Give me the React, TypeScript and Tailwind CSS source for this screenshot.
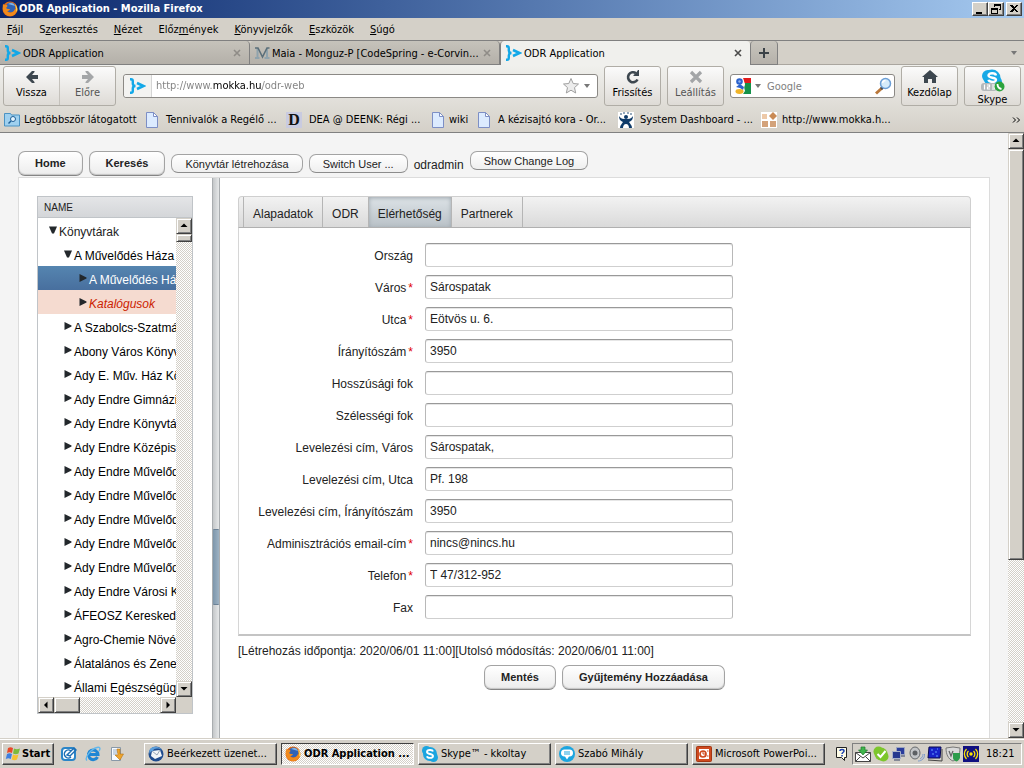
import React from "react";

const bookmarks = [
  { label: "Legtöbbször látogatott", icon: "folder", width: "w-[141px]", gap: "gap-1" },
  { label: "Tennivalók a Regélő ...", icon: "page", width: "w-[141px]", gap: "gap-[7px]" },
  { label: "DEA @ DEENK: Régi ...", icon: "dea", width: "w-[145px]", gap: "gap-[7px]" },
  { label: "wiki", icon: "page", width: "w-[46px]", gap: "gap-1" },
  { label: "A kézisajtó kora - Or...", icon: "page", width: "w-[141px]", gap: "gap-[7px]" },
  { label: "System Dashboard - ...", icon: "jira", width: "w-[143px]", gap: "gap-1" },
  { label: "http://www.mokka.h...", icon: "mokka", width: "w-[141px]", gap: "gap-1" },
];

const menu = [
  ["", "F", "ájl"],
  ["S", "z", "erkesztés"],
  ["", "N", "ézet"],
  ["Előz", "m", "ények"],
  ["", "K", "önyvjelzők"],
  ["", "E", "szközök"],
  ["", "S", "úgó"],
];

const libraries = [
  "A Szabolcs-Szatmá",
  "Abony Város Könyv",
  "Ady E. Műv. Ház Kö",
  "Ady Endre Gimnázi",
  "Ady Endre Könyvtá",
  "Ady Endre Középis",
  "Ady Endre Művelőd",
  "Ady Endre Művelőd",
  "Ady Endre Művelőd",
  "Ady Endre Művelőd",
  "Ady Endre Művelőd",
  "Ady Endre Városi K",
  "ÁFEOSZ Keresked",
  "Agro-Chemie Növé",
  "Álatalános és Zene",
  "Állami Egészségüg",
];

const fields = [
  { id: "orszag", label: "Ország", value: "" },
  { id: "varos", label: "Város", value: "Sárospatak", required: true },
  { id: "utca", label: "Utca", value: "Eötvös u. 6.", required: true },
  { id: "iranyitoszam", label: "Írányítószám", value: "3950", required: true },
  { id: "hosszusag", label: "Hosszúsági fok", value: "" },
  { id: "szelesseg", label: "Szélességi fok", value: "" },
  { id: "lev-varos", label: "Levelezési cím, Város", value: "Sárospatak," },
  { id: "lev-utca", label: "Levelezési cím, Utca", value: "Pf. 198" },
  { id: "lev-irsz", label: "Levelezési cím, Írányítószám", value: "3950" },
  { id: "email", label: "Adminisztrációs email-cím", value: "nincs@nincs.hu", required: true },
  { id: "telefon", label: "Telefon", value: "T 47/312-952", required: true },
  { id: "fax", label: "Fax", value: "" },
];

const App = () => {
  return (
    <div className="flex h-screen flex-col overflow-hidden bg-[#d4d0c8] font-['DejaVu_Sans_Condensed','DejaVu_Sans',sans-serif] text-[11px] leading-4 text-black">
      <TitleBar />
      <MenuBar />
      <TabStrip />
      <div className="shrink-0 bg-gradient-to-b from-[#f0f0ed] to-[#d4d0c8] border-b border-[#808080]">
        <Toolbar />
        <BookmarkBar />
      </div>
      <main className="flex min-h-0 flex-1 bg-[#f4f4f4]">
        <OdrPage />
        <div className="flex w-4 shrink-0 flex-col bg-[repeating-conic-gradient(#fff_0_25%,#d4d0c8_0_50%)] bg-[length:2px_2px]">
          <ScrollButton dir="up" />
          <div className="h-[68%] bg-[#d4d0c8] border border-[#d4d0c8] border-r-[#404040] border-b-[#404040] shadow-[inset_1px_1px_0_#fff,inset_-1px_-1px_0_#808080]" />
          <div className="flex-1" />
          <ScrollButton dir="down" />
        </div>
      </main>
      <TaskBar />
    </div>
  );
};

const TitleBar = () => (
  <header className="flex h-[18px] shrink-0 items-center gap-px bg-gradient-to-r from-[#0a246a] to-[#a6caf0] pl-[2px] pr-[2px] text-white">
    <FirefoxIcon />
    <h1 className="flex-1 font-bold">ODR Application - Mozilla Firefox</h1>
    <div className="flex">
      <WindowButton label="Kis méret">
        <path d="M3 9h6v2H3z" />
      </WindowButton>
      <WindowButton label="Előző méret">
        <path d="M5 1h7v6h-2V6h1V3H6v1H5zM2 5h7v6H2zM3 7v3h5V7z" fillRule="evenodd" />
      </WindowButton>
      <span className="w-[2px]" />
      <WindowButton label="Bezárás">
        <path d="M3 2h2l2 2 2-2h2L8 5.500l3 3.500H9L7 7 5 9H3l3-3.500z" />
      </WindowButton>
    </div>
  </header>
);

const WindowButton = ({ label, children }: { label: string; children: React.ReactNode }) => (
  <button
    aria-label={label}
    className="flex h-[14px] w-4 items-center justify-center border border-t-white border-l-white border-r-[#404040] border-b-[#404040] bg-[#d4d0c8] shadow-[inset_-1px_-1px_0_#808080]"
  >
    <svg width="14" height="12" viewBox="0 0 14 12" fill="#000" shapeRendering="crispEdges">
      {children}
    </svg>
  </button>
);

const MenuBar = () => (
  <nav className="flex h-[22px] shrink-0 items-center gap-4 pt-px pl-[7px]">
    {menu.map(([before, key, after]) => (
      <button key={before + key + after}>
        {before}
        <u>{key}</u>
        {after}
      </button>
    ))}
  </nav>
);

const TabStrip = () => (
  <div className="flex h-[25px] shrink-0 items-stretch border-t border-[#808080]">
    <BrowserTab title="ODR Application" icon={<OdrIcon />} />
    <BrowserTab title="Maia - Monguz-P [CodeSpring - e-Corvin..." icon={<MaiaIcon />} />
    <BrowserTab title="ODR Application" icon={<OdrIcon />} active />
    <button
      aria-label="Új lap"
      className="flex w-7 items-center justify-center rounded-t-sm border-x border-b border-[#808080] bg-gradient-to-b from-[#c8c5bd] to-[#b5b1aa]"
    >
      <svg width="12" height="12" viewBox="0 0 12 12">
        <path d="M5 1h2v4h4v2H7v4H5V7H1V5h4z" fill="#3b4247" />
      </svg>
    </button>
    <div className="flex flex-1 items-center justify-end border-b border-[#aaa69f] bg-[#d4d0c8] pr-[7px]">
      <SmallArrow />
    </div>
  </div>
);

const BrowserTab = ({ title, icon, active }: { title: string; icon: React.ReactNode; active?: boolean }) => (
  <div
    className={
      active
        ? "flex w-[250px] min-w-0 items-center gap-[2px] rounded-t-sm border-l border-[#808080] bg-[#f0f0ed] pl-1 pr-2"
        : "flex w-[250px] min-w-0 items-center gap-[2px] rounded-t-sm border-r border-b border-[#808080] bg-gradient-to-b from-[#c6c3bb] to-[#b4b0a9] pl-1 pr-2"
    }
  >
    {icon}
    <button className="min-w-0 flex-1 overflow-hidden pt-[2px] text-left whitespace-nowrap">{title}</button>
    <button aria-label="Lap bezárása" className={active ? "text-[#4a4a4a]" : "text-[#8f8c87]"}>
      <svg width="8" height="8" viewBox="0 0 8 8" fill="none" stroke="currentColor" strokeWidth="1.600">
        <path d="M1 1l6 6M7 1L1 7" />
      </svg>
    </button>
  </div>
);

const Toolbar = () => (
  <div className="flex items-center gap-[6px] px-[3px] pt-px">
    <div className="mr-px flex h-10 w-[113px] rounded-[3px] border border-[#b0ada6] bg-gradient-to-b from-[#fbfbfb] to-[#dedbd6]">
      <button className="flex flex-1 flex-col items-center border-r border-[#c5c2bc] pt-[2px]">
        <ArrowIcon className="fill-[#3d474f]" />
        Vissza
      </button>
      <button className="flex flex-1 flex-col items-center pt-[2px] text-[#555]">
        <ArrowIcon className="-scale-x-100 fill-[#a4a6a8]" />
        Előre
      </button>
    </div>
    <div className="flex h-6 min-w-0 flex-1 items-center rounded-[3px] border border-[#8b8985] bg-white">
      <div className="flex h-full w-7 items-center justify-center rounded-l-[3px] border-r border-[#d5d5d5] bg-[#f3f3f1]">
        <OdrIcon />
      </div>
      <input
        aria-label="Cím"
        defaultValue="http://www.mokka.hu/odr-web"
        className="ml-1 min-w-0 flex-1 bg-[linear-gradient(90deg,#808080_57px,#000_57px,#000_106px,#808080_106px)] bg-clip-text text-transparent outline-none"
      />
      <button aria-label="Könyvjelzőzés" className="mr-1">
        <svg width="18" height="18" viewBox="0 0 18 18">
          <path
            d="M9 1.500l2.200 5 5.300.5-4 3.600 1.200 5.400L9 13.200 4.300 16l1.200-5.400-4-3.600 5.300-.5z"
            fill="#ececec"
            stroke="#a0a0a0"
          />
        </svg>
      </button>
      <button aria-label="Előzmények megjelenítése" className="mr-[7px]">
        <SmallArrow />
      </button>
    </div>
    <ToolButton label="Frissítés">
      <svg width="16" height="16" viewBox="0 0 16 16">
        <path d="M12.500 10.500A5 5 0 1 1 11 4.200" fill="none" stroke="#3d474f" strokeWidth="2.600" />
        <path d="M8.500 7V6l2-1.500L13 1h1v6z" fill="#3d474f" />
      </svg>
    </ToolButton>
    <ToolButton label="Leállítás" muted>
      <svg width="16" height="16" viewBox="0 0 16 16">
        <path d="M3 3l10 10M13 3L3 13" stroke="#a3a5a7" strokeWidth="3.200" />
      </svg>
    </ToolButton>
    <div className="flex h-6 w-[165px] shrink-0 items-center rounded-[3px] border border-[#8b8985] bg-white pl-1 pr-[2px]">
      <svg width="16" height="16" viewBox="0 0 16 16" className="shrink-0">
        <path d="M8 0h8v6H9z" fill="#e11b1b" />
        <path d="M10 5h6v11H8z" fill="#15924a" />
        <path d="M0 0h8l2 6-1 3 1 4-2 3H0z" fill="#fff" />
        <circle cx="4.500" cy="3.500" r="3.300" fill="#2b62cc" />
        <path d="M5 6l4 3-1 3-3-2-4-1z" fill="#2b62cc" />
        <ellipse cx="4.500" cy="13.500" rx="4" ry="2.400" fill="#f0b429" />
        <circle cx="4.500" cy="3.500" r="1.200" fill="#8fb2ee" />
      </svg>
      <button aria-label="Keresőszolgáltatás" className="mx-1">
        <SmallArrow />
      </button>
      <input aria-label="Keresés" placeholder="Google" className="ml-[2px] min-w-0 flex-1 pt-[2px] outline-none placeholder:text-[#808080]" />
      <button aria-label="Keresés indítása">
        <svg width="18" height="18" viewBox="0 0 18 18">
          <path d="M7 10l2 2-6 5.500-2-2z" fill="#b9773a" />
          <path d="M8 9l2 2-2 2-2-2z" fill="#47484a" />
          <circle cx="11.500" cy="6.500" r="5" fill="#d5ebfa" stroke="#6c9fd6" strokeWidth="1.500" />
          <path d="M8.500 6a3 3 0 0 1 3-2.500" stroke="#fff" strokeWidth="1.500" fill="none" />
        </svg>
      </button>
    </div>
    <ToolButton label="Kezdőlap">
      <svg width="16" height="16" viewBox="0 0 16 16">
        <path d="M8 1l8 7h-2v6h-4v-4H6v4H2V8H0z" fill="#3d474f" />
      </svg>
    </ToolButton>
    <ToolButton label="Skype">
      <svg width="24" height="23" viewBox="0 0 24 23" className="shrink-0">
        <circle cx="7" cy="7" r="6" fill="#17a9e6" />
        <circle cx="15" cy="13" r="6" fill="#17a9e6" />
        <circle cx="11" cy="9" r="8.500" fill="#17a9e6" />
        <path d="M15 6.500C14.500 3.500 7.500 3.500 7.500 6.500c0 2.800 7.500 1.700 7.500 4.300 0 3.200-7 2.500-7.500 0" fill="none" stroke="#fff" strokeWidth="2.400" />
        <rect x="0" y="14" width="16" height="8" rx="3" fill="#b4b9bb" />
        <path d="M3.500 15.500v5M6 16h2.500v2H6.500v2h2.500M11 16h2.500v4H11M11 18h2" stroke="#fff" strokeWidth="1.200" fill="none" />
        <circle cx="18.500" cy="17.500" r="5" fill="#2ba33c" />
        <path d="M16.500 15c0 3 1.500 4.500 4 5" stroke="#fff" strokeWidth="1.800" fill="none" />
      </svg>
    </ToolButton>
  </div>
);

const ToolButton = ({ label, children, muted }: { label: string; children: React.ReactNode; muted?: boolean }) => (
  <button
    className={`flex h-10 w-[57px] shrink-0 flex-col items-center rounded-[3px] border border-[#b0ada6] bg-gradient-to-b from-[#fbfbfb] to-[#dedbd6] pt-[2px] ${
      muted ? "text-[#555]" : ""
    }`}
  >
    {children}
    {label}
  </button>
);

const BookmarkBar = () => (
  <nav className="flex h-[26px] items-center pt-[2px] pl-1 pr-[3px]">
    {bookmarks.map((b) => (
      <a key={b.label} href="#" className={`flex shrink-0 items-center whitespace-nowrap ${b.width} ${b.gap}`}>
        <BookmarkIcon name={b.icon} />
        {b.label}
      </a>
    ))}
    <button aria-label="További könyvjelzők" className="ml-auto">
      <svg width="9" height="6" viewBox="0 0 9 6" fill="none" stroke="#000">
        <path d="M1 .5L3.500 3 1 5.500M5 .5L7.500 3 5 5.500" />
      </svg>
    </button>
  </nav>
);

const BookmarkIcon = ({ name }: { name: string }) => {
  if (name === "folder") {
    return (
      <svg width="16" height="16" viewBox="0 0 16 16" className="shrink-0">
        <path d="M.5 1.500h6l1 1.500h8v11h-15z" fill="#9fd0ef" stroke="#4b93c3" />
        <circle cx="9" cy="7" r="2.500" fill="#e6f5ff" stroke="#1f5f96" />
        <path d="M7 9L4.500 11.500" stroke="#1f5f96" strokeWidth="1.500" />
      </svg>
    );
  }
  if (name === "page") {
    return (
      <svg width="14" height="16" viewBox="0 0 14 16" className="shrink-0">
        <path d="M1.500.5h7l4 4v11h-11z" fill="#dcebff" stroke="#7d8fc5" />
        <path d="M8.500.5v4h4z" fill="#fff" stroke="#7d8fc5" />
      </svg>
    );
  }
  if (name === "dea") {
    return (
      <span className="flex size-4 shrink-0 items-center justify-center bg-[#c9cbe0] font-['Liberation_Serif',serif] text-[16px] leading-4 font-bold text-[#111]">
        D
      </span>
    );
  }
  if (name === "jira") {
    return (
      <svg width="16" height="16" viewBox="0 0 16 16" className="mr-[2px] shrink-0">
        <path d="M0 0h16v16H0z" fill="#fff" />
        <g fill="#0f3b69">
          <circle cx="8" cy="5" r="2" />
          <circle cx="3" cy="2" r=".8" />
          <circle cx="6" cy="1" r=".8" />
          <circle cx="10" cy="1" r=".8" />
          <circle cx="13" cy="2" r=".8" />
          <path d="M1 4c2 3 4 3 7 3s5 0 7-3c0 3-1 5-4 6 1 2 3 3 3 6h-3c0-2-1-4-3-4s-3 2-3 4H2c0-3 2-4 3-6-3-1-4-3-4-6z" />
        </g>
      </svg>
    );
  }
  return (
    <svg width="16" height="16" viewBox="0 0 16 16" className="mr-px shrink-0">
      <path d="M0 0h16v16H0z" fill="#fff" />
      <path d="M1 2h5v5H1z" fill="#edc9a8" />
      <path d="M12 0l4 4-4 4-4-4z" fill="#c98a55" />
      <path d="M1 9h6v6H1zM9 9h6v6H9z" fill="#d3a27a" />
    </svg>
  );
};

const OdrPage = () => (
  <div className="flex min-w-0 flex-1 flex-col pl-[18px] pr-[18px] pt-[18px] font-['Liberation_Sans',Arial,sans-serif] text-xs text-[#222]">
    <div className="flex h-[26px] shrink-0 items-start gap-[6px]">
      <BigButton>Home</BigButton>
      <BigButton>Keresés</BigButton>
      <div className="flex items-start gap-[6px] pt-[3px]">
        <SmallButton>Könyvtár létrehozása</SmallButton>
        <SmallButton>Switch User ...</SmallButton>
        <span className="pt-[3px]">odradmin</span>
      </div>
      <SmallButton>Show Change Log</SmallButton>
    </div>
    <div className="flex min-h-0 flex-1 border border-b-0 border-[#dcdcdc] bg-white">
      <div className="flex w-[193px] shrink-0 flex-col pt-[18px] pr-[19px] pb-6 pl-[18px]">
        <LibraryTree />
      </div>
      <div className="flex w-2 shrink-0 flex-col justify-center border-x border-[#a9adb0] bg-gradient-to-r from-[#c4c7c9] to-[#e6e8e9]">
        <div className="mt-[218px] h-[76px] rounded-[1px] border-y border-[#6c8296] bg-gradient-to-r from-[#7d96ab] to-[#9db2c3]" />
      </div>
      <div className="min-w-0 flex-1 pt-[18px] pr-[18px] pl-[18px]">
        <div role="tablist" className="flex h-8 rounded-t-sm border border-[#cfcfcf] border-b-[#b0b0b0] bg-gradient-to-b from-[#f2f2f2] to-[#dadada] pl-1">
          <FormTab first>Alapadatok</FormTab>
          <FormTab>ODR</FormTab>
          <FormTab active>Elérhetőség</FormTab>
          <FormTab>Partnerek</FormTab>
        </div>
        <form className="flex flex-col gap-2 border border-t-0 border-[#d6d6d6] border-b-2 border-b-[#c4c4c4] py-[15px] pl-2">
          {fields.map((f) => (
            <div key={f.id} className="flex h-6 items-center gap-3">
              <label htmlFor={f.id} className="w-[166px] shrink-0 pt-[2px] text-right whitespace-nowrap">
                {f.label}
                {f.required && <span className="pl-[2px] text-[#e00000]">*</span>}
              </label>
              <input
                id={f.id}
                defaultValue={f.value}
                className="h-6 w-[308px] rounded-[3px] border border-[#b8b8b8] border-t-[#999] border-b-[#cfcfcf] bg-white px-1 outline-none shadow-[inset_0_1px_0_#e6e6e6]"
              />
            </div>
          ))}
        </form>
        <p className="pt-[7px] whitespace-nowrap">[Létrehozás időpontja: 2020/06/01 11:00][Utolsó módosítás: 2020/06/01 11:00]</p>
        <div className="flex justify-center gap-[6px] pt-[6px]">
          <BigButton>Mentés</BigButton>
          <BigButton>Gyűjtemény Hozzáadása</BigButton>
        </div>
      </div>
    </div>
  </div>
);

const BigButton = ({ children }: { children: React.ReactNode }) => (
  <button className="h-[25px] rounded-[7px] border border-[#a3a3a3] border-b-[#858585] bg-gradient-to-b from-white to-[#ececec] px-4 text-[11px] font-bold whitespace-nowrap shadow-[inset_0_-1px_1px_#c4c4c4]">
    {children}
  </button>
);

const SmallButton = ({ children }: { children: React.ReactNode }) => (
  <button className="h-[19px] rounded-[7px] border border-[#a3a3a3] border-b-[#8c8c8c] bg-gradient-to-b from-white to-[#efefef] px-[13px] text-[11px] leading-4 whitespace-nowrap">
    {children}
  </button>
);

const FormTab = ({ children, active, first }: { children: React.ReactNode; active?: boolean; first?: boolean }) => (
  <button
    role="tab"
    aria-selected={!!active}
    className={`border-r border-[#b5b5b5] px-[9px] pt-1 ${first ? "border-l" : ""} ${
      active ? "bg-gradient-to-b from-[#dde3e7] to-[#b9c1c7] shadow-[inset_0_1px_4px_#9da6ad]" : ""
    }`}
  >
    {children}
  </button>
);

const LibraryTree = () => (
  <section className="flex min-h-0 flex-1 flex-col border border-[#c0c4c8] bg-white">
    <h2 className="h-[21px] shrink-0 border-b border-[#c0c4c8] bg-gradient-to-b from-[#e4e5e7] to-[#d4d6d9] pl-[6px] text-[10px] leading-[22px]">
      NAME
    </h2>
    <div className="flex min-h-0 flex-1">
      <ul className="min-w-0 flex-1 overflow-hidden text-black">
        <TreeItem indent="pl-[11px]" open className="text-[#222]">
          Könyvtárak
        </TreeItem>
        <TreeItem indent="pl-[26px]" open>
          A Művelődés Háza
        </TreeItem>
        <TreeItem indent="pl-[41px]" className="bg-gradient-to-b from-[#5585b0] to-[#486f9e] text-white">
          A Művelődés Há
        </TreeItem>
        <TreeItem indent="pl-[41px]" className="bg-[#f5dbd0] text-[#cc2200] italic">
          Katalógusok
        </TreeItem>
        {libraries.map((name, i) => (
          <TreeItem key={i} indent="pl-[26px]">
            {name}
          </TreeItem>
        ))}
      </ul>
      <div className="flex w-4 shrink-0 flex-col bg-[repeating-conic-gradient(#fff_0_25%,#d4d0c8_0_50%)] bg-[length:2px_2px]">
        <ScrollButton dir="up" />
        <div className="h-2 bg-[#d4d0c8] border border-[#d4d0c8] border-r-[#404040] border-b-[#404040] shadow-[inset_1px_1px_0_#fff,inset_-1px_-1px_0_#808080]" />
        <div className="flex-1" />
        <ScrollButton dir="down" />
      </div>
    </div>
    <div className="flex h-4 shrink-0 bg-[repeating-conic-gradient(#fff_0_25%,#d4d0c8_0_50%)] bg-[length:2px_2px]">
      <ScrollButton dir="left" />
      <div className="w-[26px] bg-[#d4d0c8] border border-[#d4d0c8] border-r-[#404040] border-b-[#404040] shadow-[inset_1px_1px_0_#fff,inset_-1px_-1px_0_#808080]" />
      <div className="flex-1" />
      <ScrollButton dir="right" />
      <div className="w-4 bg-[#d4d0c8]" />
    </div>
  </section>
);

const TreeItem = ({
  children,
  indent,
  open,
  className = "",
}: {
  children: React.ReactNode;
  indent: string;
  open?: boolean;
  className?: string;
}) => (
  <li className={`flex h-6 items-center gap-[2px] whitespace-nowrap ${indent} ${className}`}>
    <svg width="8" height="8" viewBox="0 0 8 8" className="shrink-0" fill="#23282c">
      {open ? <path d="M0 .5h8L5 7.500H3z" /> : <path d="M.5 0l7 3.500v1L.5 8z" />}
    </svg>
    <span className="pt-[3px]">{children}</span>
  </li>
);

const arrows = {
  up: "M3.500 8h7L7 4.500z",
  down: "M3.500 5h7L7 8.500z",
  left: "M8.500 3.500v7L5 7z",
  right: "M5.500 3.500v7L9 7z",
};

const ScrollButton = ({ dir }: { dir: "up" | "down" | "left" | "right" }) => (
  <button
    aria-label={`scroll ${dir}`}
    className="flex size-4 shrink-0 items-center justify-center border border-[#d4d0c8] border-r-[#404040] border-b-[#404040] bg-[#d4d0c8] shadow-[inset_1px_1px_0_#fff,inset_-1px_-1px_0_#808080]"
  >
    <svg width="14" height="14" viewBox="0 0 14 14" className="shrink-0">
      <path d={arrows[dir]} />
    </svg>
  </button>
);

const TaskBar = () => (
  <footer className="flex h-[30px] shrink-0 items-center border-t border-[#d4d0c8] pr-[2px] pl-[2px] shadow-[inset_0_1px_0_#fff]">
    <button className="flex h-[22px] w-[52px] items-center gap-px border border-t-white border-l-white border-r-[#404040] border-b-[#404040] pl-[2px] font-bold shadow-[inset_-1px_-1px_0_#808080]">
      <svg width="16" height="16" viewBox="0 0 16 16" className="shrink-0">
        <path d="M3 2c2-1 3-1 5 0L7 7C5 6 4 6 2 7z" fill="#e8492a" />
        <path d="M9 2.500c2 1 3.500 1 6 0l-1.500 5c-2 1-3.500 1-5.500 0z" fill="#7cbb3c" />
        <path d="M2 8c2-1 3-1 5 0l-1.200 5c-2-1-3-1-5 0z" fill="#3f7fe0" />
        <path d="M8 8.500c2 1 3.500 1 5.500 0l-1.500 5c-2 1-3 1-5.200 0z" fill="#f7c22f" />
      </svg>
      Start
    </button>
    <div className="ml-[7px] flex gap-2">
      <button aria-label="Asztal megjelenítése">
        <svg width="16" height="16" viewBox="0 0 16 16">
          <rect x="1" y="2" width="13" height="12" rx="3" fill="#fff" stroke="#2a85c8" strokeWidth="2" />
          <path d="M10 5a4 4 0 1 0 0 6M6 9l7-7 2 2-6 6z" fill="none" stroke="#1c6eb4" strokeWidth="1.500" />
        </svg>
      </button>
      <button aria-label="Internet Explorer">
        <svg width="16" height="16" viewBox="0 0 16 16" fill="none">
          <path d="M12.500 11A4.800 4.800 0 1 1 13 8.500H4" stroke="#1f86d4" strokeWidth="3" />
          <path d="M2 14.500C-1 12 6 3 12 1.500c4-1 3 2 2 3.500" stroke="#62b7ec" strokeWidth="1.400" />
        </svg>
      </button>
      <button aria-label="Jegyzettömb">
        <svg width="16" height="16" viewBox="0 0 16 16">
          <path d="M2.500 1.500h9v13h-9z" fill="#f7fbff" stroke="#8898a8" />
          <path d="M4 4h6M4 6h6M4 8h4" stroke="#9ab0c8" />
          <path d="M8 3h3v5h3.500L11 14 6 9h3z" fill="#efa52c" stroke="#b4741a" strokeWidth=".6" />
        </svg>
      </button>
    </div>
    <div className="ml-[19px] flex min-w-0 flex-1 gap-1">
      <TaskButton title="Beérkezett üzenet..." icon={<ThunderbirdIcon />} />
      <TaskButton title="ODR Application ..." icon={<FirefoxIcon />} active />
      <TaskButton title="Skype™ - kkoltay" icon={<SkypeIcon />} />
      <TaskButton title="Szabó Mihály" icon={<ChatIcon />} />
      <TaskButton title="Microsoft PowerPoi..." icon={<PowerPointIcon />} />
    </div>
    <svg width="12" height="16" viewBox="0 0 12 16" className="mr-1 shrink-0">
      <path d="M.5 1.500h10v10h-2v3l-3-3h-5z" fill="#fffde8" stroke="#222" />
      <path d="M4 5c0-2 4-2 4 0 0 1.500-2 1.500-2 3M6 9v1.500" fill="none" stroke="#1b3fae" strokeWidth="1.500" />
    </svg>
    <div className="flex h-[22px] w-[170px] shrink-0 items-center gap-[2px] border border-t-[#808080] border-l-[#808080] border-r-white border-b-white pl-[2px]">
      <svg width="16" height="16" viewBox="0 0 16 16">
        <path d="M.5 6.500h15v9H.5z" fill="#fff" stroke="#444" />
        <path d="M.5 6.500L8 12l7.500-5.500M.5 15.500l5-5M15.500 15.500l-5-5" fill="none" stroke="#444" />
        <path d="M6 1h4v3h2.500L8 9 3.500 4H6z" fill="#3fb54c" stroke="#1f7a2b" strokeWidth=".7" />
      </svg>
      <svg width="16" height="16" viewBox="0 0 16 16">
        <circle cx="5.500" cy="5.500" r="5" fill="#7dc62c" />
        <circle cx="10.500" cy="10.500" r="5" fill="#7dc62c" />
        <circle cx="8" cy="8" r="6.500" fill="#7dc62c" />
        <path d="M4.500 8l3 3 5-6" fill="none" stroke="#fff" strokeWidth="2" />
      </svg>
      <svg width="16" height="16" viewBox="0 0 16 16">
        <path d="M5.500 1.500h8v7h-8z" fill="#2a3c9c" stroke="#9ba4bf" />
        <path d="M1.500 5.500h8v7h-8z" fill="#27398f" stroke="#a9b1c8" />
        <path d="M3 14h6M10 10h4" stroke="#6b7287" strokeWidth="1.500" />
      </svg>
      <svg width="16" height="16" viewBox="0 0 16 16">
        <ellipse cx="6" cy="7" rx="5" ry="6" fill="#c2c4c6" stroke="#66696c" />
        <circle cx="6" cy="7" r="2.500" fill="#5d6063" />
        <path d="M11 13c2-1 3-3 3-5M9 15c4 0 7-3 6.500-7" fill="none" stroke="#7d9ccc" />
      </svg>
      <svg width="16" height="16" viewBox="0 0 16 16">
        <path d="M2 1h12l-1 11H1z" fill="#1722c8" stroke="#0a0a50" />
        <path d="M4 4h2M8 6h2M5 8h2M10 3h1M9 10h2" stroke="#66a0ff" />
        <path d="M1 14l14 1V3" fill="none" stroke="#444" />
      </svg>
      <svg width="16" height="16" viewBox="0 0 16 16">
        <path d="M1 2l7-1 7 1c0 6-2 11-7 13-5-2-7-7-7-13z" fill="#d9d9d9" stroke="#777" />
        <path d="M4 5l2 5 2-5" fill="none" stroke="#666" strokeWidth="1.300" />
        <path d="M8 7h7v5c-1 2-2 3-3.500 3.500C10 15 8 14 8 12z" fill="#2d9c4c" />
      </svg>
      <svg width="16" height="16" viewBox="0 0 16 16">
        <path d="M0 0h16v16H0z" fill="#101080" />
        <circle cx="8" cy="8" r="1.700" fill="#ffe600" />
        <path d="M5.500 5a4 4 0 0 0 0 6M10.500 5a4 4 0 0 1 0 6M3.500 3a7 7 0 0 0 0 10M12.500 3a7 7 0 0 1 0 10" fill="none" stroke="#ffe600" strokeWidth="1.300" />
      </svg>
      <time className="ml-[5px]">18:21</time>
    </div>
  </footer>
);

const TaskButton = ({ title, icon, active }: { title: string; icon: React.ReactNode; active?: boolean }) => (
  <button
    className={
      active
        ? "flex h-[22px] w-[133px] items-center gap-[3px] border border-t-[#404040] border-l-[#404040] border-r-white border-b-white bg-[repeating-conic-gradient(#fff_0_25%,#d4d0c8_0_50%)] bg-[length:2px_2px] pt-px pl-[3px] font-bold whitespace-nowrap"
        : "flex h-[22px] w-[133px] items-center gap-[3px] border border-t-white border-l-white border-r-[#404040] border-b-[#404040] pl-[3px] whitespace-nowrap shadow-[inset_-1px_-1px_0_#808080]"
    }
  >
    {icon}
    {title}
  </button>
);

const SmallArrow = () => (
  <svg width="6" height="4" viewBox="0 0 6 4">
    <path d="M0 0h6L3 4z" fill="#777" />
  </svg>
);

const ArrowIcon = ({ className }: { className: string }) => (
  <svg width="14" height="16" viewBox="0 0 14 16" className={className}>
    <path d="M1 8l6-6h2.500v1L7 6h6v4H7l2.500 3v1H7z" />
  </svg>
);

const OdrIcon = () => (
  <svg width="17" height="16" viewBox="0 0 17 16" className="shrink-0" fill="none" stroke="#12a8e8">
    <path d="M1 1.200h1q1.800 0 1.800 1.800v2.500Q3.800 8 6.500 8 3.800 8 3.800 10.500V13q0 1.800-1.800 1.800H1" strokeWidth="2.400" />
    <path d="M8 5l6.500 3L8 11" strokeWidth="2.600" />
  </svg>
);

const MaiaIcon = () => (
  <svg width="16" height="16" viewBox="0 0 16 16" className="shrink-0" fill="none">
    <path d="M3.500 3v10M13 3v10M1 13h4.500M10.500 13h5" stroke="#8fa3ad" strokeWidth="2" />
    <path d="M1 3h3l4.500 9L13 3h2.500" stroke="#5b6f7a" strokeWidth="1.600" />
  </svg>
);

const FirefoxIcon = () => (
  <svg width="16" height="16" viewBox="0 0 16 16" className="shrink-0">
    <circle cx="8" cy="8" r="7.500" fill="#e66a10" />
    <circle cx="8.500" cy="6.500" r="5" fill="#2f62b5" />
    <path d="M6 3c3-2 6-1 7 2-2-1-4-1-7-2z" fill="#7fb6ea" />
    <path d="M1 3c1 1 2 1 4 1 1 1 0 2-1 3 1 1 2 1 4 1-1 2-2 2-3 2 2 3 7 2 8-2l2 1c-1 5-5 6.500-8 6C2 14 0 9 1 3z" fill="#f08a1c" />
    <path d="M13 3c2 2 3 5 2 8-1-1-1-2-1-3z" fill="#ffd24a" />
  </svg>
);

const ThunderbirdIcon = () => (
  <svg width="16" height="16" viewBox="0 0 16 16" className="shrink-0">
    <circle cx="8" cy="8" r="7.500" fill="#1f4c8f" />
    <path d="M4 5l8-1 2 6-7 3-4-3z" fill="#f2f5f8" />
    <path d="M4 5l5 4 3-5" fill="none" stroke="#97a6b8" />
    <path d="M2 3c3-3 9-3 12 1-4-2-8-2-9 1-2 0-3 1-3 3-1-2-1-3 0-5z" fill="#5ea0dc" />
  </svg>
);

const SkypeIcon = () => (
  <svg width="16" height="16" viewBox="0 0 16 16" className="shrink-0">
    <circle cx="4.500" cy="4.500" r="4.500" fill="#1ba5e0" />
    <circle cx="11.500" cy="11.500" r="4.500" fill="#1ba5e0" />
    <circle cx="8" cy="8" r="7" fill="#1ba5e0" />
    <path d="M11 5.500C10.500 3.500 5 3.500 5 6c0 2.500 6 1.500 6 4s-5.500 2.500-6 .3" fill="none" stroke="#fff" strokeWidth="1.900" />
  </svg>
);

const ChatIcon = () => (
  <svg width="16" height="16" viewBox="0 0 16 16" className="shrink-0">
    <circle cx="8" cy="8" r="8" fill="#1ba5e0" />
    <path d="M5.500 3.500h5a3 3 0 0 1 0 7H10l-2 3-2-3h-.5a3 3 0 0 1 0-7z" fill="#fff" />
    <path d="M5 6h6M5 8h6" stroke="#1ba5e0" />
  </svg>
);

const PowerPointIcon = () => (
  <svg width="16" height="16" viewBox="0 0 16 16" className="shrink-0">
    <rect x=".5" y=".5" width="15" height="15" rx="1" fill="#cf4a1f" stroke="#a33612" />
    <path d="M3 3h10v10H3z" fill="#fff" />
    <circle cx="7" cy="8" r="3" fill="none" stroke="#cf4a1f" strokeWidth="1.700" />
    <path d="M7 8V5M7 8h3M11 5h1.500M11 10h1.500" stroke="#cf4a1f" />
  </svg>
);

export default App;
